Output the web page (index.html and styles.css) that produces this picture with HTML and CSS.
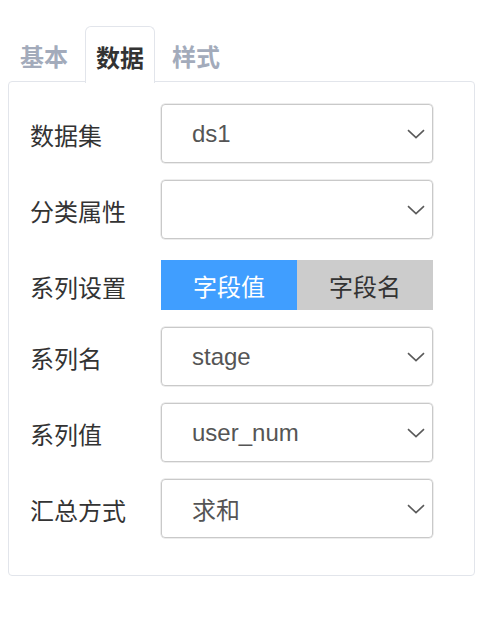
FILE: index.html
```html
<!DOCTYPE html>
<html lang="zh">
<head>
<meta charset="utf-8">
<title>数据</title>
<link rel="stylesheet" href="styles.css">
</head>
<body>
<div class="panel">
  <div class="tabs">
    <div class="tab">基本</div>
    <div class="tab active">数据</div>
    <div class="tab">样式</div>
  </div>
  <div class="content">
    <div class="row">
      <div class="label">数据集</div>
      <div class="select"><span class="value">ds1</span><svg class="chev" viewBox="0 0 18 10" width="18" height="10"><path d="M1 1.2 L9 8.6 L17 1.2" fill="none" stroke="#5a5a5a" stroke-width="1.6"/></svg></div>
    </div>
    <div class="row">
      <div class="label">分类属性</div>
      <div class="select"><span class="value"></span><svg class="chev" viewBox="0 0 18 10" width="18" height="10"><path d="M1 1.2 L9 8.6 L17 1.2" fill="none" stroke="#5a5a5a" stroke-width="1.6"/></svg></div>
    </div>
    <div class="row row-toggle">
      <div class="label">系列设置</div>
      <div class="toggle">
        <div class="opt on">字段值</div>
        <div class="opt">字段名</div>
      </div>
    </div>
    <div class="row">
      <div class="label">系列名</div>
      <div class="select"><span class="value">stage</span><svg class="chev" viewBox="0 0 18 10" width="18" height="10"><path d="M1 1.2 L9 8.6 L17 1.2" fill="none" stroke="#5a5a5a" stroke-width="1.6"/></svg></div>
    </div>
    <div class="row">
      <div class="label">系列值</div>
      <div class="select"><span class="value">user_num</span><svg class="chev" viewBox="0 0 18 10" width="18" height="10"><path d="M1 1.2 L9 8.6 L17 1.2" fill="none" stroke="#5a5a5a" stroke-width="1.6"/></svg></div>
    </div>
    <div class="row">
      <div class="label">汇总方式</div>
      <div class="select"><span class="value">求和</span><svg class="chev" viewBox="0 0 18 10" width="18" height="10"><path d="M1 1.2 L9 8.6 L17 1.2" fill="none" stroke="#5a5a5a" stroke-width="1.6"/></svg></div>
    </div>
  </div>
</div>
</body>
</html>
```
FILE: styles.css
```css
html, body {
  margin: 0;
  padding: 0;
  background: #ffffff;
}
body {
  font-family: "Liberation Sans", "Noto Sans CJK SC", sans-serif;
  font-size: 24px;
  color: #333333;
}
.panel {
  padding: 26px 0 0 8px;
  width: 467px;
}
.tabs {
  display: flex;
  height: 56px;
  position: relative;
  z-index: 1;
  margin-bottom: -1px;
}
.tab {
  width: 70px;
  box-sizing: border-box;
  margin-right: 6px;
  display: flex;
  align-items: center;
  justify-content: center;
  font-weight: bold;
  color: #a3abbb;
  border: 1px solid transparent;
  border-bottom: none;
  border-radius: 6px 6px 0 0;
  padding-top: 2px;
}
.tab.active {
  color: #333333;
  background: #ffffff;
  border-color: #e2e5eb;
  height: 57px;
}
.tab:first-child {
  margin-left: 1px;
}
.content {
  border: 1px solid #e2e5eb;
  border-radius: 4px;
  padding: 22px 41px 20px 21px;
}
.row {
  display: flex;
  align-items: center;
  height: 59px;
  margin-bottom: 17px;
}
.label {
  width: 131px;
  flex: none;
  padding-top: 1px;
  color: #333333;
}
.select {
  flex: 1;
  height: 59px;
  box-sizing: border-box;
  border: 1px solid #c9c9c9;
  border-radius: 4px;
  box-shadow: 0 0 0 0.5px #dcdcdc;
  display: flex;
  align-items: center;
  justify-content: space-between;
  padding: 0 7px 0 30px;
}
.value {
  color: #555555;
}
.chev {
  display: block;
}
.row-toggle {
  height: 54px;
  align-items: flex-start;
}
.row-toggle .label {
  padding-top: 13px;
}
.toggle {
  flex: 1;
  display: flex;
  height: 50px;
  margin-top: 4px;
}
.opt {
  flex: 1;
  display: flex;
  align-items: center;
  justify-content: center;
  background: #cccccc;
  color: #333333;
}
.opt.on {
  background: #409eff;
  color: #ffffff;
}
```
